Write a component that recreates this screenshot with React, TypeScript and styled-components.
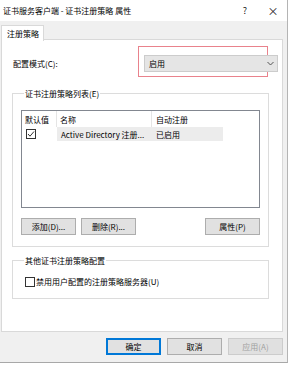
import styled, { createGlobalStyle } from "styled-components";

const GlobalStyle = createGlobalStyle`
  html, body {
    margin: 0;
    padding: 0;
    background: #ffffff;
  }
  body {
    font-family: "Noto Sans CJK SC", "Noto Sans", sans-serif;
    font-size: 8px;
    color: #000;
  }
`;

const Window = styled.div`
  width: 287px;
  height: 362px;
  background: #f0f0f0;
  border-right: 1px solid #b4b4b4;
  border-bottom: 1px solid #a8a8a8;
  display: flex;
  flex-direction: column;
`;

const TitleBar = styled.div`
  height: 21px;
  background: #ffffff;
  display: flex;
  align-items: center;
  padding: 0 0 0 3px;
  font-size: 8px;
`;

const Title = styled.span`
  flex: 1;
`;

const TitleButton = styled.span<{ $size?: number }>`
  width: 28px;
  text-align: center;
  font-size: ${(p) => p.$size ?? 9}px;
  color: #222;
`;

const TabStrip = styled.div`
  margin-top: 4px;
  padding-left: 1px;
  display: flex;
  height: 14px;
`;

const Tab = styled.div`
  background: #ffffff;
  border: 1px solid #d9d9d9;
  border-bottom: none;
  padding: 0 4px 0 5px;
  display: flex;
  align-items: center;
  position: relative;
  z-index: 1;
  height: 15px;
`;

const Panel = styled.div`
  margin-left: 1px;
  width: 266px;
  height: 276px;
  background: #ffffff;
  border: 1px solid #d9d9d9;
  padding: 15px 4px 0 10px;
  box-sizing: content-box;
  position: relative;
  display: flex;
  flex-direction: column;
`;

const ModeRow = styled.div`
  display: flex;
  align-items: center;
  height: 17px;
  padding-left: 1px;
`;

const Combo = styled.div`
  margin-left: auto;
  width: 128px;
  height: 15px;
  background: #e5e5e5;
  border: 1px solid #cccccc;
  display: flex;
  align-items: center;
  padding-left: 4px;
  position: relative;
`;

const ComboArrow = styled.svg`
  position: absolute;
  right: 3px;
  top: 5px;
`;

const Highlight = styled.div`
  position: absolute;
  left: 136px;
  top: 6px;
  width: 128px;
  height: 29px;
  border: 1px solid #e9828c;
  pointer-events: none;
`;

const Group = styled.fieldset<{ $pb: number }>`
  margin: 0 9px 0 0;
  border: 1px solid #dcdcdc;
  padding: 0 8px ${(p) => p.$pb}px 8px;
  min-inline-size: 0;
`;

const Legend = styled.legend`
  padding: 0 1px;
  margin-left: 3px;
  font-size: 8px;
  line-height: 11px;
`;

const ListBox = styled.div`
  margin-top: 11px;
  height: 96px;
  border: 1px solid #828790;
  background: #fff;
`;

const ListRow = styled.div<{ $header?: boolean }>`
  display: grid;
  grid-template-columns: 35px 95px 71px;
  height: ${(p) => (p.$header ? 16 : 14)}px;
  align-items: center;
`;

const Cell = styled.div<{ $sep?: boolean; $selected?: boolean }>`
  height: 100%;
  display: flex;
  align-items: center;
  padding-left: ${(p) => (p.$sep ? 3 : 4)}px;
  border-right: ${(p) => (p.$sep ? "1px solid #e5e5e5" : "none")};
  background: ${(p) => (p.$selected ? "#ececec" : "transparent")};
  white-space: nowrap;
  overflow: hidden;
`;

const Check = styled.span`
  width: 8px;
  height: 8px;
  border: 1px solid #333;
  background: #fff;
  display: inline-flex;
  align-items: center;
  justify-content: center;
  flex-shrink: 0;
`;

const ButtonRow = styled.div`
  display: flex;
  gap: 5px;
  margin-top: 10px;
`;

const Button = styled.button<{ $default?: boolean; $ml?: boolean }>`
  width: 55px;
  height: 17px;
  padding: 0;
  font-family: inherit;
  font-size: 8px;
  color: ${(p) => (p.disabled ? "#a0a0a0" : "#000")};
  background: ${(p) => (p.disabled ? "#e0e0e0" : "#e1e1e1")};
  border: 1px solid
    ${(p) => (p.$default ? "#0078d7" : p.disabled ? "#cccccc" : "#adadad")};
  box-shadow: ${(p) => (p.$default ? "inset 0 0 0 1px #0078d7" : "none")};
  margin-left: ${(p) => (p.$ml ? "auto" : "0")};
`;

const CheckRow = styled.label`
  display: flex;
  align-items: center;
  gap: 1px;
  margin-top: 10px;
  padding-left: 4px;
`;

const Footer = styled.div`
  flex: 1;
  display: flex;
  justify-content: flex-end;
  align-items: flex-start;
  gap: 6px;
  padding: 6px 4px 0 0;
`;

const Spacer = styled.div<{ $h: number }>`
  height: ${(p) => p.$h}px;
  flex-shrink: 0;
`;

const ChevronDown = () => (
  <ComboArrow width="7" height="5" viewBox="0 0 7 5">
    <path d="M0.5 1 L3.5 4 L6.5 1" fill="none" stroke="#555" strokeWidth="1" />
  </ComboArrow>
);

const Tick = () => (
  <svg width="8" height="8" viewBox="0 0 8 8">
    <path d="M1 4 L3 6.2 L7 1.5" fill="none" stroke="#333" strokeWidth="1" />
  </svg>
);

export default function App() {
  return (
    <>
      <GlobalStyle />
      <Window>
        <TitleBar>
          <Title>证书服务客户端 - 证书注册策略 属性</Title>
          <TitleButton>?</TitleButton>
          <TitleButton $size={11}>×</TitleButton>
        </TitleBar>
        <TabStrip>
          <Tab>注册策略</Tab>
        </TabStrip>
        <Panel>
          <Highlight />
          <ModeRow>
            <span>配置模式(C):</span>
            <Combo>
              启用
              <ChevronDown />
            </Combo>
          </ModeRow>
          <Spacer $h={16} />
          <Group $pb={11}>
            <Legend>证书注册策略列表(E)</Legend>
            <ListBox>
              <ListRow $header>
                <Cell $sep>默认值</Cell>
                <Cell $sep>名称</Cell>
                <Cell>自动注册</Cell>
              </ListRow>
              <ListRow>
                <Cell>
                  <Check>
                    <Tick />
                  </Check>
                </Cell>
                <Cell $selected>Active Directory 注册...</Cell>
                <Cell $selected>已启用</Cell>
              </ListRow>
            </ListBox>
            <ButtonRow>
              <Button>添加(D)...</Button>
              <Button>删除(R)...</Button>
              <Button $ml>属性(P)</Button>
            </ButtonRow>
          </Group>
          <Spacer $h={8} />
          <Group $pb={11}>
            <Legend>其他证书注册策略配置</Legend>
            <CheckRow>
              <Check />
              <span>禁用用户配置的注册策略服务器(U)</span>
            </CheckRow>
          </Group>
        </Panel>
        <Footer>
          <Button $default>确定</Button>
          <Button>取消</Button>
          <Button disabled>应用(A)</Button>
        </Footer>
      </Window>
    </>
  );
}
